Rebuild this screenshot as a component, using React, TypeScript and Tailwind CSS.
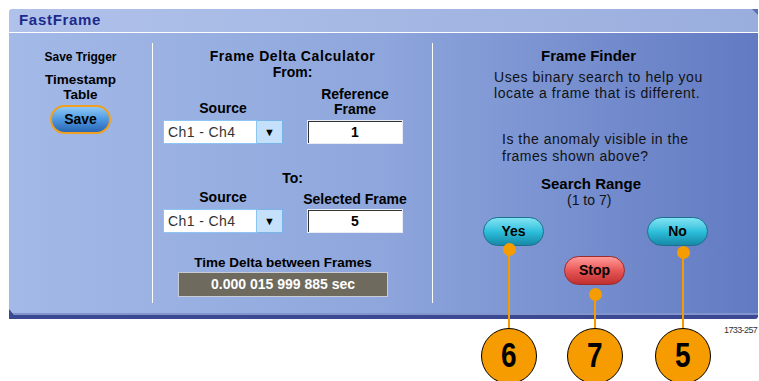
import React from 'react';

const font = { fontFamily: '"Liberation Sans", Arial, sans-serif' };

function Dropdown() {
  return (
    <div className="flex h-[24px] w-[120px]">
      <div className="flex flex-1 items-center border border-[#8cc4f4] bg-white pl-[4px] text-[14px] font-normal tracking-[0.4px] text-[#333]">
        Ch1 - Ch4
      </div>
      <div className="flex w-[26px] items-center justify-center border border-l-0 border-[#7ab4ec] bg-[#c4e0fa] text-[11px] text-black">
        ▼
      </div>
    </div>
  );
}

function NumberBox({ value }: { value: string }) {
  return (
    <div className="flex h-[24px] w-[96px] items-center justify-center border border-[#e8ecf4] bg-white shadow-[inset_1px_1px_0_#333] text-[14px] font-bold text-black">
      {value}
    </div>
  );
}

function Pill({ label, tone }: { label: string; tone: 'cyan' | 'red' | 'blue' }) {
  const tones = {
    cyan: 'bg-linear-to-b from-[#7ee4f4] via-[#2cc0dc] to-[#1788a8] border-[#1d6f8c]',
    red: 'bg-linear-to-b from-[#ff9a9a] via-[#e85656] to-[#c03030] border-[#9c2a2a]',
    blue: 'bg-linear-to-b from-[#8cc8f8] via-[#4e98e0] to-[#2a66b4] border-[#f0a020] border-2',
  };
  return (
    <div
      className={`flex h-[29px] w-[61px] items-center justify-center rounded-full border text-[14px] font-bold text-black ${tones[tone]}`}
    >
      {label}
    </div>
  );
}

function Callout({ x, dotY, n }: { x: number; dotY: number; n: string }) {
  return (
    <>
      <div className="absolute w-[2px] bg-[#f59c00]" style={{ left: x - 1, top: dotY, height: 330 - dotY }} />
      <div className="absolute h-[13px] w-[13px] rounded-full bg-[#f59c00]" style={{ left: x - 6, top: dotY - 6 }} />
      <div
        className="absolute flex h-[56px] w-[56px] items-center justify-center rounded-full border border-black bg-[#f79c00] text-[35px] font-bold leading-none text-black"
        style={{ left: x - 28, top: 328 }}
      >
        <span className="mt-[-4px] scale-x-[0.8]">{n}</span>
      </div>
    </>
  );
}

export default function App() {
  return (
    <div className="relative h-[381px] w-[759px] overflow-hidden bg-white" style={font}>
      <div className="ml-[9px] mt-[9px] flex h-[310px] w-[749px] flex-col">
        {/* title bar */}
        <div className="relative flex h-[24px] items-center rounded-tl-[3px] border-b border-white bg-linear-to-r from-[#b0c2ea] to-[#9aaede] pl-[10px]">
          <span className="text-[15px] font-bold tracking-[0.7px] text-[#1c2a8c]">FastFrame</span>
          <div className="absolute right-0 top-0 h-0 w-0 border-l-[6px] border-t-[6px] border-l-transparent border-t-[#5a6cb4]" />
        </div>

        {/* body */}
        <div className="flex flex-1 bg-linear-to-r from-[#a3b9e7] via-[#8ea6dc] to-[#627ac2] text-black">
          {/* save trigger */}
          <div className="flex w-[143px] flex-col items-center pt-[17px] font-bold">
            <div className="text-[12px] leading-[15px]">Save Trigger</div>
            <div className="mt-[7px] text-[13.5px] leading-[15px]">Timestamp</div>
            <div className="text-[13.5px] leading-[15px]">Table</div>
            <div className="mt-[3px]">
              <Pill label="Save" tone="blue" />
            </div>
          </div>

          <div className="my-[10px] w-px bg-white" />

          {/* frame delta calculator */}
          <div className="flex w-[279px] flex-col pt-[15px] text-[14px] font-bold leading-[15px]">
            <div className="text-center leading-[16px] tracking-[0.6px]">Frame Delta Calculator</div>
            <div className="text-center leading-[16px]">From:</div>
            <div className="ml-[10px] mt-[7px] flex items-end gap-[24px]">
              <div className="flex w-[120px] flex-col items-center">
                <div className="leading-[14px]">Source</div>
                <div className="mt-[5px]">
                  <Dropdown />
                </div>
              </div>
              <div className="flex w-[96px] flex-col items-center">
                <div className="leading-[15px]">Reference</div>
                <div className="leading-[15px]">Frame</div>
                <div className="mt-[3px]">
                  <NumberBox value="1" />
                </div>
              </div>
            </div>
            <div className="mt-[27px] text-center">To:</div>
            <div className="ml-[10px] mt-[4px] flex items-end gap-[24px]">
              <div className="flex w-[120px] flex-col items-center">
                <div className="leading-[14px]">Source</div>
                <div className="mt-[5px]">
                  <Dropdown />
                </div>
              </div>
              <div className="flex w-[96px] flex-col items-center">
                <div className="whitespace-nowrap leading-[14px]">Selected Frame</div>
                <div className="mt-[3px]">
                  <NumberBox value="5" />
                </div>
              </div>
            </div>
            <div className="ml-[25px] mt-[22px] flex w-[210px] flex-col items-center">
              <div className="whitespace-nowrap text-[13.5px]">Time Delta between Frames</div>
              <div className="mt-[2px] flex h-[25px] w-[210px] items-center justify-center border border-[#c8ccd4] bg-[#6e6b5e] text-[14px] text-white">
                0.000 015 999 885 sec
              </div>
            </div>
          </div>

          <div className="my-[10px] w-px bg-white" />

          {/* frame finder */}
          <div className="flex flex-1 flex-col pt-[15px] text-[14px] leading-[15px] text-[#111]">
            <div className="ml-[108px] text-[15px] font-bold text-black">Frame Finder</div>
            <div className="ml-[61px] mt-[6px] leading-[16px] tracking-[0.55px]">
              Uses binary search to help you
              <br />
              locate a frame that is different.
            </div>
            <div className="ml-[69px] mt-[30px] leading-[17px] tracking-[0.5px]">
              Is the anomaly visible in the
              <br />
              frames shown above?
            </div>
            <div className="ml-[108px] mt-[11px] text-[15px] font-bold text-black">Search Range</div>
            <div className="ml-[134px] mt-[2px]">(1 to 7)</div>
            <div className="ml-[50px] mt-[9px] flex w-[225px] justify-between">
              <Pill label="Yes" tone="cyan" />
              <Pill label="No" tone="cyan" />
            </div>
            <div className="ml-[131px] mt-[10px]">
              <Pill label="Stop" tone="red" />
            </div>
          </div>
        </div>

        {/* bottom edge */}
        <div className="h-[2px] bg-[#8294cc]" />
        <div className="relative h-[4px] rounded-br-[3px] bg-[#3b4892]">
          <div className="absolute bottom-0 left-0 h-0 w-0 border-b-[10px] border-r-[8px] border-b-[#3b4892] border-r-transparent" />
        </div>
      </div>

      <div className="absolute left-[724px] top-[324px] text-[9px] tracking-[-0.6px] text-[#333]">1733-257</div>

      <Callout x={509} dotY={249} n="6" />
      <Callout x={595} dotY={294} n="7" />
      <Callout x={683} dotY={252} n="5" />
    </div>
  );
}
